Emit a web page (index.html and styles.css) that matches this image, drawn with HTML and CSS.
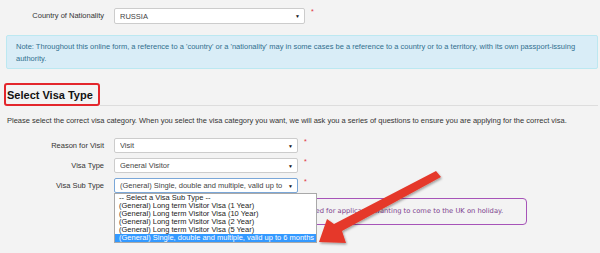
FILE: index.html
```html
<!DOCTYPE html>
<html lang="en">
<head>
  <meta charset="UTF-8">
  <title>Select Visa Type</title>
  <link rel="stylesheet" href="styles.css">
</head>
<body>
  <div class="page">
    <div class="row row-country">
      <label class="lbl">Country of Nationality</label>
      <div class="sel sel-wide"><span class="val">RUSSIA</span><span class="caret">&#9660;</span></div>
      <span class="req">*</span>
    </div>

    <div class="note">
      Note: Throughout this online form, a reference to a 'country' or a 'nationality' may in some cases be a reference to a country or to a territory, with its own passport-issuing authority.
    </div>

    <h2 class="section-title"><span class="hl">Select Visa Type</span><span class="rule"></span></h2>

    <p class="intro">Please select the correct visa category. When you select the visa category you want, we will ask you a series of questions to ensure you are applying for the correct visa.</p>

    <div class="row">
      <label class="lbl">Reason for Visit</label>
      <div class="sel"><span class="val">Visit</span><span class="caret">&#9660;</span></div>
      <span class="req">*</span>
    </div>
    <div class="row">
      <label class="lbl">Visa Type</label>
      <div class="sel"><span class="val">General Visitor</span><span class="caret">&#9660;</span></div>
      <span class="req">*</span>
    </div>
    <div class="row">
      <label class="lbl">Visa Sub Type</label>
      <div class="sel sel-open">
        <span class="val">(General) Single, double and multiple, valid up to 6 months</span><span class="caret">&#9660;</span>
        <ul class="dropdown">
          <li>-- Select a Visa Sub Type --</li>
          <li>(General) Long term Visitor Visa (1 Year)</li>
          <li>(General) Long term Visitor Visa (10 Year)</li>
          <li>(General) Long term Visitor Visa (2 Year)</li>
          <li>(General) Long term Visitor Visa (5 Year)</li>
          <li class="active">(General) Single, double and multiple, valid up to 6 months</li>
        </ul>
      </div>
      <span class="req">*</span>
    </div>

    <div class="info">This visa is designed for applicants wanting to come to the UK on holiday.</div>
  </div>

  <svg class="pointer" width="600" height="253" viewBox="0 0 600 253">
    <defs>
      <filter id="shade" x="-20%" y="-20%" width="140%" height="140%">
        <feDropShadow dx="1" dy="1.5" stdDeviation="1" flood-color="#000" flood-opacity="0.35"/>
      </filter>
    </defs>
    <polygon filter="url(#shade)" fill="#e5392c" points="436,171 441,177 342,231 346,243 319,242 327,219 334,224"/>
  </svg>
</body>
</html>
```

FILE: styles.css
```css
* {
  box-sizing: border-box;
  margin: 0;
  padding: 0;
}
body {
  font-family: 'Liberation Sans', Arial, sans-serif;
  font-size: 7.5px;
  color: #333;
  background-color: #f3f3f3;
  width: 600px;
  height: 253px;
  overflow: hidden;
  position: relative;
}
.page {
  padding: 8px 2px 0 6px;
}
.row {
  display: flex;
  align-items: flex-start;
  margin-bottom: 5px;
}
.lbl {
  width: 98px;
  margin-right: 10px;
  text-align: right;
  line-height: 15px;
  color: #333;
}
.row-country .lbl {
  line-height: 16px;
}
.sel {
  position: relative;
  display: flex;
  align-items: center;
  width: 184px;
  height: 15px;
  padding: 0 4px 0 5px;
  background-color: #fff;
  border: 1px solid #ccc;
  border-radius: 2px;
  color: #555;
}
.sel-wide {
  width: 191px;
  height: 16px;
}
.sel .val {
  flex: 1;
  white-space: nowrap;
  overflow: hidden;
  color: #444;
}
.caret {
  font-size: 5px;
  color: #111;
  margin-left: 4px;
}
.sel-open {
  border-color: #7aa7d8;
}
.req {
  color: #e0303a;
  font-size: 7px;
  margin-left: 6px;
  line-height: 7px;
}
.note {
  margin-top: 11px;
  padding: 5px 9px 4px;
  background-color: #d9edf7;
  border: 1px solid #bce8f1;
  border-radius: 2px;
  color: #31708f;
  line-height: 11.5px;
}
.section-title {
  display: flex;
  align-items: flex-end;
  margin: 14px 0 0 -2px;
  font-size: 11px;
  font-weight: bold;
  color: #111;
}
.hl {
  display: block;
  width: 96px;
  height: 23px;
  padding-left: 1px;
  line-height: 20px;
  border: 2px solid #e3262c;
  border-radius: 3px;
}
.rule {
  flex: 1;
  border-bottom: 1px solid #ddd;
}
.intro {
  margin: 10px 0 12px 1px;
  line-height: 10px;
  color: #333;
}
.dropdown {
  position: absolute;
  top: 14px;
  left: -1px;
  width: 203px;
  list-style: none;
  background-color: #fff;
  border: 1px solid #a9a9a9;
  color: #222;
  z-index: 2;
}
.dropdown li {
  height: 8px;
  line-height: 8px;
  padding-left: 4px;
  white-space: nowrap;
}
.dropdown li.active {
  background-color: #3399ff;
  color: #fff;
}
.info {
  margin-left: 108px;
  width: 413px;
  height: 27px;
  padding-left: 139px;
  border: 1px solid #a653b8;
  border-radius: 4px;
  color: #7b3d8c;
  font-family: 'DejaVu Sans', Verdana, sans-serif;
  font-size: 6.75px;
  line-height: 25px;
  white-space: nowrap;
  overflow: hidden;
}
.pointer {
  position: absolute;
  top: 0;
  left: 0;
  z-index: 5;
}
```
